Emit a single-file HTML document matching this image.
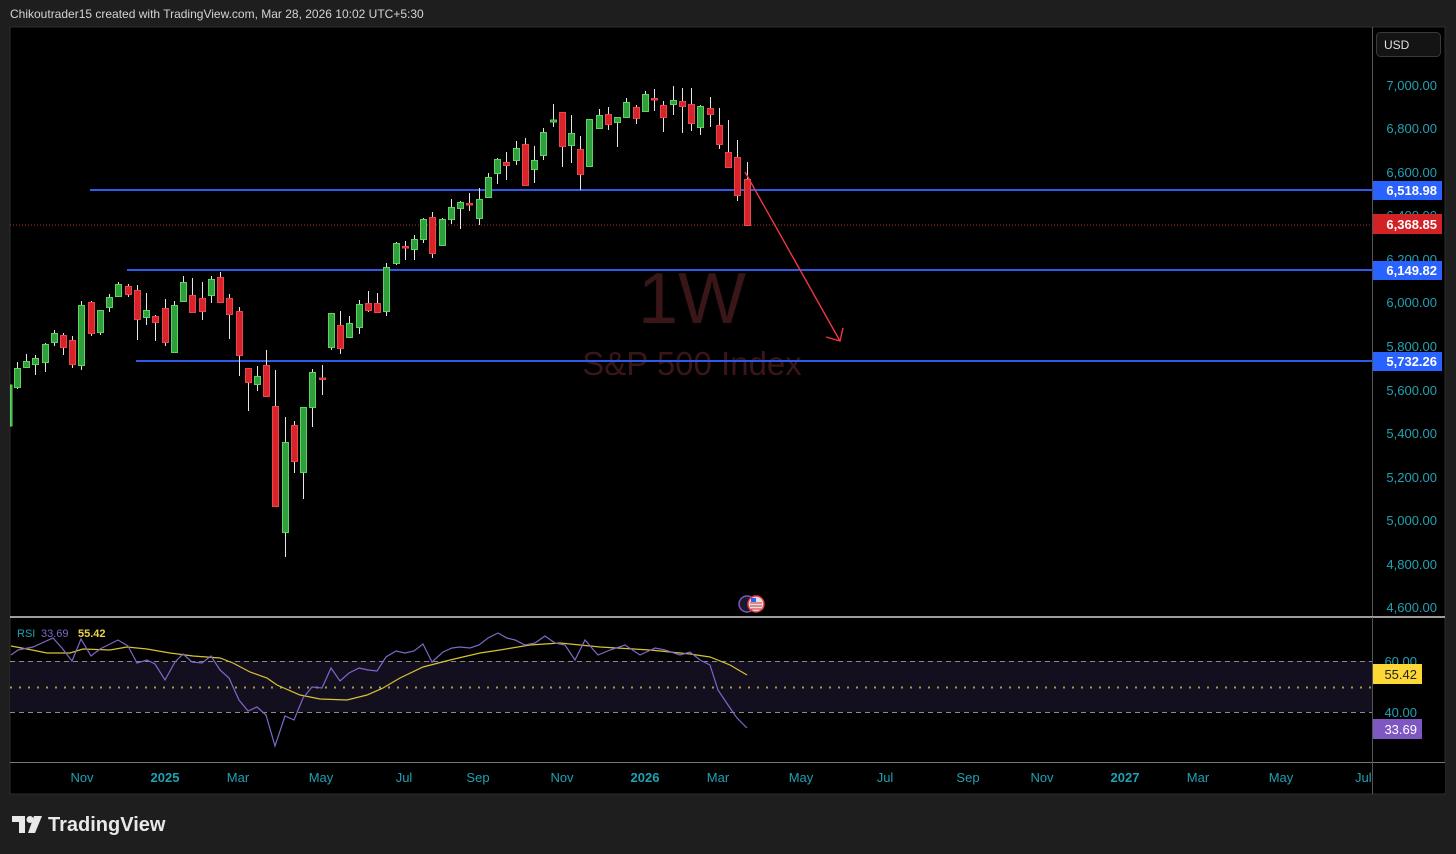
<!DOCTYPE html>
<html><head><meta charset="utf-8"><style>
html,body{margin:0;padding:0;background:#1e1e1e;width:1456px;height:854px;overflow:hidden}
svg{display:block}
text{font-family:"Liberation Sans",sans-serif}
</style></head><body>
<svg width="1456" height="854" viewBox="0 0 1456 854" xmlns="http://www.w3.org/2000/svg">
<rect width="1456" height="854" fill="#1e1e1e"/>
<text x="10" y="18" fill="#d4d4d4" font-size="12">Chikoutrader15 created with TradingView.com, Mar 28, 2026 10:02 UTC+5:30</text>
<rect x="10" y="27" width="1435" height="767" fill="#000" stroke="#2e2e2e"/>
<!-- watermark -->
<text x="692" y="323" fill="#3a1618" font-size="72" text-anchor="middle">1W</text>
<text x="692" y="375" fill="#3a1618" font-size="33" text-anchor="middle">S&amp;P 500 Index</text>
<!-- price dotted -->
<line x1="10" y1="225" x2="1372" y2="225" stroke="#b2332b" stroke-width="1" stroke-dasharray="1,2"/>
<!-- horizontal lines -->
<g stroke="#2f5be8" stroke-width="2">
<line x1="90" y1="190" x2="1372" y2="190"/>
<line x1="127" y1="270" x2="1372" y2="270"/>
<line x1="136" y1="361" x2="1372" y2="361"/>
</g>
<!-- wicks -->
<g stroke="#e6e6e6" stroke-width="1">
<path d="M17.5 362V389M26.5 354V368M35.5 355V375M45.5 343V372M54.5 330V346M81.5 301V370M100.5 310V335M109.5 294V312M118.5 282V297M146.5 293V325M174.5 301V352M183.5 276V302M211.5 276V303M257.5 366V391M285.5 417V557M303.5 407V499M312.5 369V427M331.5 313V350M349.5 316V337M359.5 300V334M386.5 263V316M396.5 242V265M414.5 235V260M423.5 218V243M442.5 218V245M451.5 199V224M460.5 201V229M479.5 188V225M488.5 173V198M497.5 158V184M516.5 141V165M534.5 146V183M543.5 128V160M553.5 104V127M571.5 115V163M589.5 119V166M599.5 109V129M617.5 117V147M626.5 98V117M645.5 91V111M673.5 86V115M700.5 105V135"/>
<path d="M63.5 333V355M72.5 336V368M91.5 301V336M128.5 284V297M137.5 285V340M155.5 315V341M165.5 299V346M192.5 278V312M202.5 282V320M220.5 272V302M229.5 294V339M239.5 307V376M248.5 368V411M266.5 350V397M275.5 370V506M294.5 421V473M322.5 365V395M340.5 311V354M368.5 291V312M377.5 293V313M405.5 241V260M432.5 212V258M469.5 193V211M506.5 152V180M525.5 138V185M562.5 112V167M580.5 136V190M608.5 107V130M636.5 105V124M654.5 89V111M663.5 101V132M682.5 88V133M691.5 88V131M710.5 97V127M719.5 108V149M728.5 120V167M737.5 140V201M747.5 162V226"/>
</g>
<!-- green bodies -->
<g fill="#2f9e3c" stroke="#5fd35f" stroke-width="1">
<rect x="10.5" y="385" width="1.5" height="41"/>
<rect x="14.5" y="368.5" width="6" height="19"/><rect x="23.5" y="361.5" width="6" height="6"/><rect x="32.5" y="358.5" width="6" height="6"/><rect x="42.5" y="344.5" width="6" height="18"/><rect x="51.5" y="333.5" width="6" height="9"/><rect x="78.5" y="305.5" width="6" height="60"/><rect x="97.5" y="310.5" width="6" height="22"/><rect x="106.5" y="297.5" width="6" height="10"/><rect x="115.5" y="284.5" width="6" height="12"/><rect x="143.5" y="310.5" width="6" height="7"/><rect x="171.5" y="305.5" width="6" height="47"/><rect x="180.5" y="282.5" width="6" height="19"/><rect x="208.5" y="279.5" width="6" height="16"/><rect x="254.5" y="376.5" width="6" height="8"/><rect x="282.5" y="442.5" width="6" height="90"/><rect x="300.5" y="407.5" width="6" height="65"/><rect x="309.5" y="372.5" width="6" height="35"/><rect x="328.5" y="313.5" width="6" height="34"/><rect x="346.5" y="323.5" width="6" height="14"/><rect x="356.5" y="304.5" width="6" height="23"/><rect x="383.5" y="267.5" width="6" height="44"/><rect x="393.5" y="243.5" width="6" height="20"/><rect x="411.5" y="239.5" width="6" height="10"/><rect x="420.5" y="219.5" width="6" height="20"/><rect x="439.5" y="219.5" width="6" height="26"/><rect x="448.5" y="207.5" width="6" height="12"/><rect x="457.5" y="202.5" width="6" height="6"/><rect x="476.5" y="199.5" width="6" height="19"/><rect x="485.5" y="177.5" width="6" height="20"/><rect x="494.5" y="159.5" width="6" height="14"/><rect x="513.5" y="148.5" width="6" height="12"/><rect x="531.5" y="160.5" width="6" height="9"/><rect x="540.5" y="132.5" width="6" height="23"/><rect x="550.5" y="120" width="6" height="2"/><rect x="568.5" y="133.5" width="6" height="12"/><rect x="586.5" y="119.5" width="6" height="47"/><rect x="596.5" y="115.5" width="6" height="13"/><rect x="614.5" y="117.5" width="6" height="5"/><rect x="623.5" y="102.5" width="6" height="15"/><rect x="642.5" y="94.5" width="6" height="17"/><rect x="670.5" y="100.5" width="6" height="4"/><rect x="697.5" y="106.5" width="6" height="21"/>
</g>
<!-- red bodies -->
<g fill="#d9232a" stroke="#e8474b" stroke-width="1">
<rect x="60.5" y="335.5" width="6" height="12"/><rect x="69.5" y="340.5" width="6" height="24"/><rect x="88.5" y="302.5" width="6" height="31"/><rect x="125.5" y="286.5" width="6" height="8"/><rect x="134.5" y="290.5" width="6" height="29"/><rect x="152.5" y="316.5" width="6" height="6"/><rect x="162.5" y="308.5" width="6" height="34"/><rect x="189.5" y="295.5" width="6" height="17"/><rect x="199.5" y="298.5" width="6" height="13"/><rect x="217.5" y="277.5" width="6" height="25"/><rect x="226.5" y="298.5" width="6" height="16"/><rect x="236.5" y="311.5" width="6" height="44"/><rect x="245.5" y="368.5" width="6" height="14"/><rect x="263.5" y="365.5" width="6" height="31"/><rect x="272.5" y="406.5" width="6" height="100"/><rect x="291.5" y="425.5" width="6" height="36"/><rect x="319.5" y="378" width="6" height="1.5"/><rect x="337.5" y="325.5" width="6" height="23"/><rect x="365.5" y="303.5" width="6" height="7"/><rect x="374.5" y="303.5" width="6" height="9"/><rect x="402.5" y="246.5" width="6" height="1.5"/><rect x="429.5" y="217.5" width="6" height="36"/><rect x="466.5" y="203.5" width="6" height="1.5"/><rect x="503.5" y="162.5" width="6" height="3"/><rect x="522.5" y="144.5" width="6" height="41"/><rect x="559.5" y="112.5" width="6" height="34"/><rect x="577.5" y="149.5" width="6" height="25"/><rect x="605.5" y="114.5" width="6" height="10"/><rect x="633.5" y="107.5" width="6" height="11"/><rect x="651.5" y="98.5" width="6" height="1.5"/><rect x="660.5" y="105.5" width="6" height="12"/><rect x="679.5" y="101.5" width="6" height="5"/><rect x="688.5" y="104.5" width="6" height="19"/><rect x="707.5" y="108.5" width="6" height="6"/><rect x="716.5" y="125.5" width="6" height="19"/><rect x="725.5" y="152.5" width="6" height="15"/><rect x="734.5" y="157.5" width="6" height="38"/><rect x="744.5" y="179.5" width="6" height="46"/>
</g>
<!-- arrow -->
<g stroke="#f23645" stroke-width="1.4" fill="none">
<line x1="745" y1="172" x2="840" y2="341"/>
<path d="M843 328L840 341L826 337"/>
</g>
<!-- event icon -->
<circle cx="747" cy="604" r="8" fill="#1a1a2a" stroke="#7e57c2" stroke-width="1.5"/>
<circle cx="756" cy="604" r="8" fill="#e0e0e0" stroke="#f23645" stroke-width="1.5"/>
<rect x="751" y="598" width="5" height="4" fill="#2962ff"/>
<path d="M750 603h12M750 606h12M751 609h10" stroke="#d32f2f" stroke-width="1"/>
<!-- price axis -->
<line x1="1372.5" y1="27" x2="1372.5" y2="794" stroke="#555" stroke-width="1"/>
<rect x="1376.5" y="32.5" width="64" height="24" rx="4" fill="#141414" stroke="#3a3a3a"/>
<text x="1384" y="49" fill="#e0e0e0" font-size="12">USD</text>
<g fill="#1fa2b4" font-size="13" text-anchor="end">
<text x="1437" y="90">7,000.00</text><text x="1437" y="133">6,800.00</text><text x="1437" y="177">6,600.00</text><text x="1437" y="220">6,400.00</text><text x="1437" y="264">6,200.00</text><text x="1437" y="307">6,000.00</text><text x="1437" y="351">5,800.00</text><text x="1437" y="395">5,600.00</text><text x="1437" y="438">5,400.00</text><text x="1437" y="482">5,200.00</text><text x="1437" y="525">5,000.00</text><text x="1437" y="569">4,800.00</text><text x="1437" y="612">4,600.00</text>
</g>
<rect x="1373" y="181" width="69" height="19" fill="#2962ff"/>
<rect x="1373" y="214" width="69" height="20" fill="#d32226"/>
<rect x="1373" y="261" width="69" height="19" fill="#2962ff"/>
<rect x="1373" y="352" width="69" height="19" fill="#2962ff"/>
<g fill="#fff" font-size="13" font-weight="bold" text-anchor="end">
<text x="1437" y="195">6,518.98</text><text x="1437" y="229">6,368.85</text><text x="1437" y="275">6,149.82</text><text x="1437" y="366">5,732.26</text>
</g>
<!-- pane separator -->
<line x1="10" y1="617" x2="1445" y2="617" stroke="#d0d0d0" stroke-width="1.5"/>
<!-- RSI -->
<rect x="10" y="661" width="1362" height="51" fill="#130f1f"/>
<line x1="10" y1="661.5" x2="1372" y2="661.5" stroke="#8a8a8a" stroke-dasharray="5,4"/>
<line x1="10" y1="712.5" x2="1372" y2="712.5" stroke="#8a8a8a" stroke-dasharray="5,4"/>
<line x1="10" y1="687.5" x2="1372" y2="687.5" stroke="#a39a40" stroke-width="2" stroke-dasharray="2,7"/>
<polyline fill="none" stroke="#d8c233" stroke-width="1.2" points="11,646 27,649 47,653 70,653 83,649 110,650 127,647 147,649 170,653 193,656 220,658 233,663 250,672 267,678 277,685 300,695 320,699 347,700 367,695 383,688 400,678 423,667 450,660 480,653 500,650 530,645 560,643 600,647 650,650 690,654 710,657 730,665 747,675"/>
<polyline fill="none" stroke="#7e68c9" stroke-width="1.2" points="11,655 18,650 33,647 53,638 62,648 72,661 81,639 91,656 100,649 118,640 128,646 137,663 147,660 155,664 165,680 175,662 183,654 192,662 202,663 211,656 220,670 229,678 239,700 248,711 257,707 266,715 275,746 285,716 294,720 303,698 312,687 322,688 331,668 340,681 349,673 359,668 368,670 377,671 386,657 396,651 405,653 414,651 423,644 432,662 443,652 452,648 460,647 470,648 479,645 488,638 498,633 507,638 515,640 525,645 535,643 545,636 555,643 565,645 575,660 585,640 598,655 610,650 625,645 640,655 655,648 665,650 680,655 690,652 700,660 710,665 718,690 728,705 737,718 747,728"/>
<text x="17" y="637" font-size="11" fill="#1fa2b4">RSI</text>
<text x="41" y="637" font-size="11" fill="#7e68c9">33.69</text>
<text x="78" y="637" font-size="11" fill="#e8d44d" font-weight="bold">55.42</text>
<g fill="#1fa2b4" font-size="13" text-anchor="end">
<text x="1417" y="666">60.00</text><text x="1417" y="717">40.00</text>
</g>
<rect x="1373" y="664" width="49" height="20" fill="#fdd835"/>
<text x="1417" y="679" font-size="13" fill="#222" text-anchor="end">55.42</text>
<rect x="1373" y="719" width="49" height="20" fill="#7e57c2"/>
<text x="1417" y="734" font-size="13" fill="#fff" text-anchor="end">33.69</text>
<!-- time axis -->
<line x1="10" y1="762.5" x2="1445" y2="762.5" stroke="#777" stroke-width="1"/>
<g fill="#1fa2b4" font-size="13" text-anchor="middle">
<text x="82" y="782">Nov</text><text x="165" y="782" font-weight="bold">2025</text><text x="238" y="782">Mar</text><text x="321" y="782">May</text><text x="404" y="782">Jul</text><text x="478" y="782">Sep</text><text x="562" y="782">Nov</text><text x="645" y="782" font-weight="bold">2026</text><text x="718" y="782">Mar</text><text x="801" y="782">May</text><text x="885" y="782">Jul</text><text x="968" y="782">Sep</text><text x="1042" y="782">Nov</text><text x="1125" y="782" font-weight="bold">2027</text><text x="1198" y="782">Mar</text><text x="1281" y="782">May</text>
</g>
<text x="1355" y="782" fill="#1fa2b4" font-size="13">Jul</text>
<rect x="1373" y="763" width="72" height="30" fill="#000"/>
<line x1="1372.5" y1="617" x2="1372.5" y2="794" stroke="#555"/>
<!-- logo -->
<g fill="#e8e8e8">
<path d="M12 816h13v17h-6v-11h-7z"/>
<circle cx="30" cy="819.5" r="3.5"/>
<path d="M34 816h8l-7 17h-7z"/>
</g>
<text x="48" y="831" fill="#e8e8e8" font-size="20" font-weight="bold">TradingView</text>
</svg>
</body></html>
